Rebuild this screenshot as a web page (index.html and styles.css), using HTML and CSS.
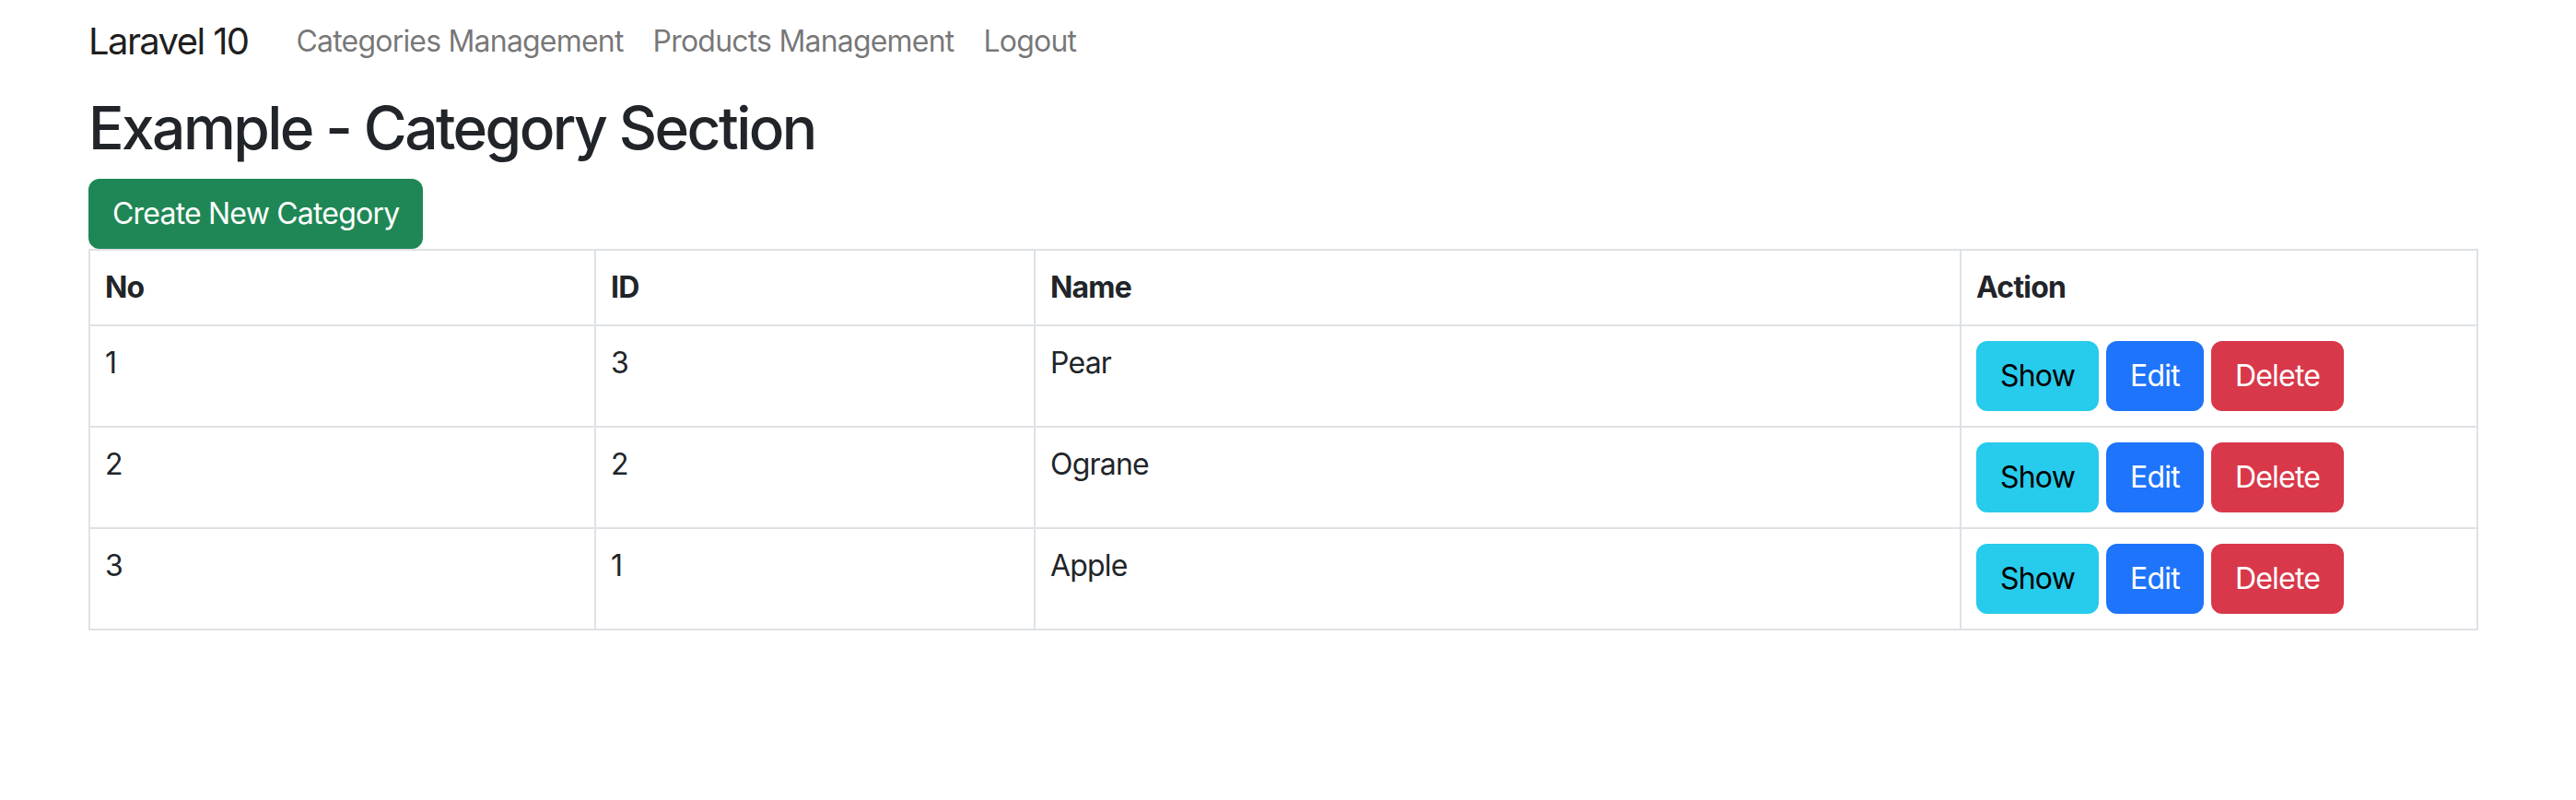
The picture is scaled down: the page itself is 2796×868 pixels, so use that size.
FILE: index.html
```html
<!DOCTYPE html>
<html lang="en">
<head>
<meta charset="utf-8">
<title>Laravel 10</title>
<link rel="stylesheet" href="styles.css">
</head>
<body>
<div class="page">
  <nav class="navbar">
    <a class="brand" href="#">Laravel 10</a>
    <ul class="nav">
      <li><a class="nav-link" href="#">Categories Management</a></li>
      <li><a class="nav-link" href="#">Products Management</a></li>
      <li><a class="nav-link" href="#">Logout</a></li>
    </ul>
  </nav>
  <main>
    <h2 class="title">Example - Category Section</h2>
    <div class="toolbar"><a class="btn btn-success" href="#">Create New Category</a></div>
    <table class="table">
      <thead>
        <tr>
          <th class="col-no">No</th>
          <th class="col-id">ID</th>
          <th class="col-name">Name</th>
          <th class="col-action">Action</th>
        </tr>
      </thead>
      <tbody>
        <tr>
          <td>1</td>
          <td>3</td>
          <td>Pear</td>
          <td><div class="actions"><a class="btn btn-info" href="#">Show</a><a class="btn btn-primary" href="#">Edit</a><button class="btn btn-danger" type="button">Delete</button></div></td>
        </tr>
        <tr>
          <td>2</td>
          <td>2</td>
          <td>Ograne</td>
          <td><div class="actions"><a class="btn btn-info" href="#">Show</a><a class="btn btn-primary" href="#">Edit</a><button class="btn btn-danger" type="button">Delete</button></div></td>
        </tr>
        <tr>
          <td>3</td>
          <td>1</td>
          <td>Apple</td>
          <td><div class="actions"><a class="btn btn-info" href="#">Show</a><a class="btn btn-primary" href="#">Edit</a><button class="btn btn-danger" type="button">Delete</button></div></td>
        </tr>
      </tbody>
    </table>
  </main>
</div>
</body>
</html>
```

FILE: styles.css
```css
html, body {
  margin: 0;
  padding: 0;
  background: #fff;
}

body {
  font-family: Inter, "Liberation Sans", Arial, sans-serif;
  font-size: 32px;
  line-height: 48px;
  color: #212529;
  letter-spacing: -0.025em;
}

.page {
  width: 2592px;
  padding-left: 96px;
}

.navbar {
  display: flex;
  align-items: center;
  padding-top: 5px;
  padding-bottom: 16px;
}

.brand {
  font-size: 40px;
  line-height: 60px;
  padding: 10px 0;
  margin-right: 36px;
  letter-spacing: -0.04em;
  color: rgba(0, 0, 0, 0.9);
  text-decoration: none;
}

.nav {
  display: flex;
  list-style: none;
  margin: 0;
  padding: 0;
}

.nav-link {
  display: block;
  padding: 16px;
  color: rgba(0, 0, 0, 0.55);
  text-decoration: none;
}

.title {
  margin: 0 0 16px;
  font-size: 64px;
  line-height: 76.8px;
  font-weight: 500;
  letter-spacing: -0.04em;
}

.toolbar {
  display: flex;
}

.btn {
  display: inline-block;
  font-family: inherit;
  font-size: 32px;
  line-height: 48px;
  letter-spacing: inherit;
  padding: 12px 24px;
  border: 2px solid transparent;
  border-radius: 12px;
  text-decoration: none;
  color: #fff;
  cursor: pointer;
}

.btn-success {
  background: #1f8755;
  border-color: #1f8755;
}

.btn-info {
  background: #27cbec;
  border-color: #27cbec;
  color: #000;
}

.btn-primary {
  background: #1e74fa;
  border-color: #1e74fa;
}

.btn-danger {
  background: #d9384a;
  border-color: #d9384a;
}

.table {
  width: 2592px;
  border-collapse: collapse;
  table-layout: fixed;
  margin: 0;
}

.table th,
.table td {
  border: 2px solid #dee2e6;
  padding: 16px;
  text-align: left;
  vertical-align: top;
}

.table th {
  font-weight: 700;
}

.col-no { width: 515px; }
.col-id { width: 443px; }
.col-name { width: 971px; }
.col-action { width: 527px; }

.actions {
  display: flex;
  gap: 8px;
}
```
